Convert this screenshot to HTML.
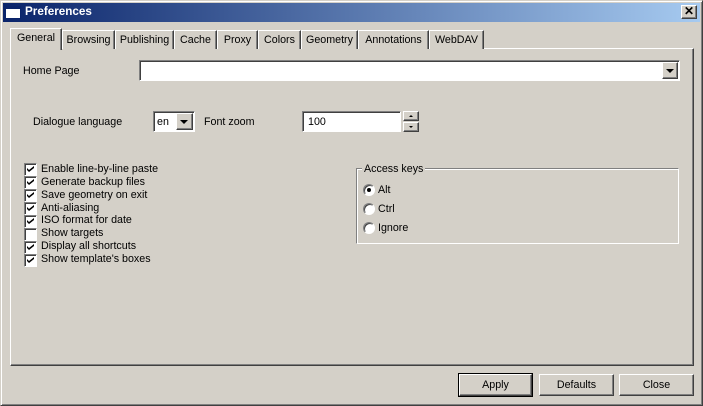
<!DOCTYPE html>
<html><head><style>
*{box-sizing:border-box;margin:0;padding:0}
body{width:703px;height:406px;background:#d4d0c8;font:10.7px "Liberation Sans",sans-serif;color:#000;position:relative;overflow:hidden}
.a{position:absolute}
.win{left:0;top:0;width:703px;height:406px;border:1px solid;border-color:#d4d0c8 #404040 #404040 #d4d0c8;box-shadow:inset 1px 1px #fff,inset -1px -1px #808080}
.title{left:3px;top:3px;width:697px;height:19px;background:linear-gradient(90deg,#0a246a,#a6caf0)}
.title span{position:absolute;left:22px;top:2px;color:#fff;font-weight:bold;font-size:11.7px}
.raised{background:#d4d0c8;border:1px solid;border-color:#fff #404040 #404040 #fff;box-shadow:inset -1px -1px #808080}
.sunk{background:#fff;border:1px solid;border-color:#808080 #fff #fff #808080;box-shadow:inset 1px 1px #404040}
.tab{top:30px;height:19px;border:1px solid;border-bottom:none;border-color:#fff #404040 #404040 #fff;box-shadow:inset -1px 0 #808080;text-align:center;padding-top:3px;background:#d4d0c8}
.pane{left:10px;top:48px;width:684px;height:318px;border:1px solid;border-color:#fff #404040 #404040 #fff;box-shadow:inset -1px -1px #808080}
.cb{left:24px;width:13px;height:13px}
.cbl{left:41px}
.chk{position:absolute;left:2px;top:2px}
.rad{width:12px;height:12px;border-radius:50%;background:#fff;border:1px solid;border-color:#808080 #fff #fff #808080;box-shadow:inset 1px 1px #404040}
.btn{top:374px;height:22px;text-align:center;padding-top:4px}
.arr{width:0;height:0;border-left:4px solid transparent;border-right:4px solid transparent;border-top:4px solid #000;position:absolute}
</style></head><body>
<div class="a win"></div>
<div class="a title"><div class="a" style="left:2px;top:3px;width:16px;height:13px;background:#fff;border:1px solid #0a246a;border-top-width:3px"></div><span>Preferences</span></div>
<div class="a raised" style="left:681px;top:5px;width:16px;height:14px;text-align:center;font-size:12px;line-height:11px;font-weight:bold">✕</div>

<div class="a pane"></div>
<div class="a tab" style="left:62px;width:53px">Browsing</div>
<div class="a tab" style="left:115px;width:59px">Publishing</div>
<div class="a tab" style="left:174px;width:43px">Cache</div>
<div class="a tab" style="left:217px;width:41px">Proxy</div>
<div class="a tab" style="left:258px;width:43px">Colors</div>
<div class="a tab" style="left:301px;width:57px">Geometry</div>
<div class="a tab" style="left:358px;width:71px">Annotations</div>
<div class="a tab" style="left:429px;width:55px">WebDAV</div>
<div class="a tab" style="left:10px;top:28px;width:52px;height:22px;padding-top:3px;z-index:2">General</div>

<div class="a" style="left:23px;top:65px">Home Page</div>
<div class="a sunk" style="left:139px;top:60px;width:541px;height:21px"></div>
<div class="a raised" style="left:662px;top:62px;width:16px;height:17px"><div class="arr" style="left:3px;top:6px"></div></div>

<div class="a" style="left:33px;top:116px">Dialogue language</div>
<div class="a sunk" style="left:153px;top:111px;width:42px;height:21px"><span style="position:absolute;left:3px;top:4px">en</span></div>
<div class="a raised" style="left:176px;top:113px;width:17px;height:17px"><div class="arr" style="left:3px;top:6px"></div></div>
<div class="a" style="left:204px;top:116px">Font zoom</div>
<div class="a sunk" style="left:302px;top:111px;width:99px;height:21px"><span style="position:absolute;left:5px;top:4px">100</span></div>
<div class="a raised" style="left:403px;top:111px;width:16px;height:10px"><div class="arr" style="left:5px;top:3px;border-top:none;border-bottom:2px solid #000;border-left-width:2px;border-right-width:2px"></div></div>
<div class="a raised" style="left:403px;top:122px;width:16px;height:10px"><div class="arr" style="left:5px;top:3px;border-top-width:2px;border-left-width:2px;border-right-width:2px"></div></div>

<div class="a sunk cb" style="top:163px"><svg class="chk" width="7" height="7"><path d="M0 2l2 2 5-4v2l-5 4-2-2z" fill="#000"/></svg></div><div class="a cbl" style="top:163px">Enable line-by-line paste</div>
<div class="a sunk cb" style="top:176px"><svg class="chk" width="7" height="7"><path d="M0 2l2 2 5-4v2l-5 4-2-2z" fill="#000"/></svg></div><div class="a cbl" style="top:176px">Generate backup files</div>
<div class="a sunk cb" style="top:189px"><svg class="chk" width="7" height="7"><path d="M0 2l2 2 5-4v2l-5 4-2-2z" fill="#000"/></svg></div><div class="a cbl" style="top:189px">Save geometry on exit</div>
<div class="a sunk cb" style="top:202px"><svg class="chk" width="7" height="7"><path d="M0 2l2 2 5-4v2l-5 4-2-2z" fill="#000"/></svg></div><div class="a cbl" style="top:202px">Anti-aliasing</div>
<div class="a sunk cb" style="top:215px"><svg class="chk" width="7" height="7"><path d="M0 2l2 2 5-4v2l-5 4-2-2z" fill="#000"/></svg></div><div class="a cbl" style="top:214px">ISO format for date</div>
<div class="a sunk cb" style="top:228px"></div><div class="a cbl" style="top:227px">Show targets</div>
<div class="a sunk cb" style="top:241px"><svg class="chk" width="7" height="7"><path d="M0 2l2 2 5-4v2l-5 4-2-2z" fill="#000"/></svg></div><div class="a cbl" style="top:240px">Display all shortcuts</div>
<div class="a sunk cb" style="top:254px"><svg class="chk" width="7" height="7"><path d="M0 2l2 2 5-4v2l-5 4-2-2z" fill="#000"/></svg></div><div class="a cbl" style="top:253px">Show template's boxes</div>

<div class="a" style="left:356px;top:168px;width:323px;height:76px;border:1px solid;border-color:#808080 #fff #fff #808080;box-shadow:inset 1px 1px #fff"></div>
<div class="a" style="left:362px;top:163px;background:#d4d0c8;padding:0 2px">Access keys</div>
<div class="a rad" style="left:363px;top:184px"><div style="position:absolute;left:3px;top:3px;width:4px;height:4px;background:#000;border-radius:50%"></div></div><div class="a" style="left:378px;top:184px">Alt</div>
<div class="a rad" style="left:363px;top:203px"></div><div class="a" style="left:378px;top:203px">Ctrl</div>
<div class="a rad" style="left:363px;top:222px"></div><div class="a" style="left:378px;top:222px">Ignore</div>

<div class="a raised btn" style="left:459px;width:73px;outline:1px solid #000">Apply</div>
<div class="a raised btn" style="left:539px;width:75px">Defaults</div>
<div class="a raised btn" style="left:619px;width:75px">Close</div>
</body></html>
